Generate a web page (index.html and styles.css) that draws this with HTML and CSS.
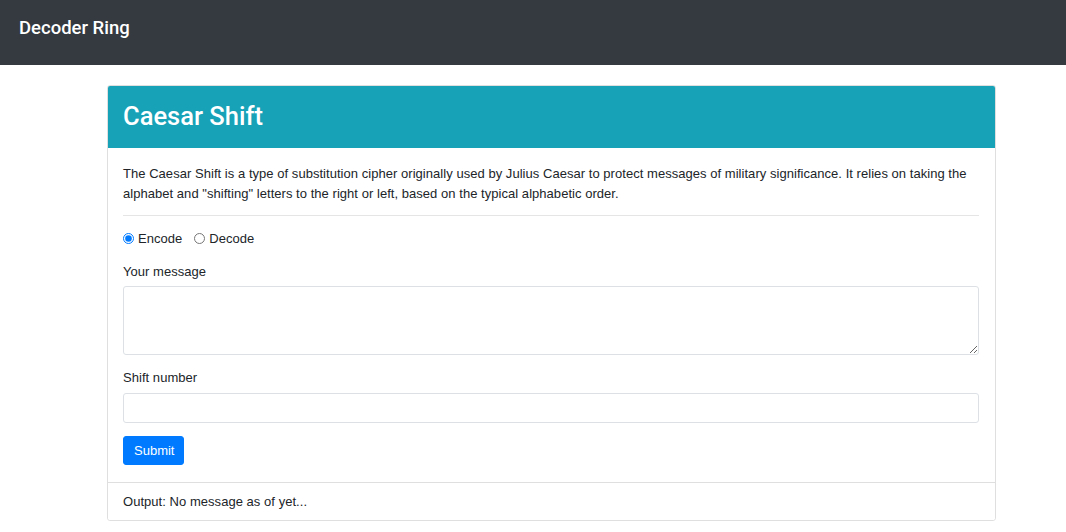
FILE: index.html
```html
<!DOCTYPE html>
<html lang="en">
<head>
<meta charset="utf-8">
<title>Decoder Ring</title>
<link rel="stylesheet" href="styles.css">
</head>
<body>
<nav class="navbar">
  <span class="brand">Decoder Ring</span>
</nav>
<main class="container">
  <section class="card">
    <header class="card-header">
      <h2 class="card-title">Caesar Shift</h2>
    </header>
    <div class="card-body">
      <p class="intro">The Caesar Shift is a type of substitution cipher originally used by Julius Caesar to protect messages of military significance. It relies on taking the alphabet and "shifting" letters to the right or left, based on the typical alphabetic order.</p>
      <hr class="divider">
      <form class="form">
        <div class="form-group radios">
          <label class="radio"><input type="radio" name="mode" checked> Encode</label>
          <label class="radio"><input type="radio" name="mode"> Decode</label>
        </div>
        <div class="form-group">
          <label class="label" for="msg">Your message</label>
          <textarea id="msg" class="control textarea"></textarea>
        </div>
        <div class="form-group">
          <label class="label" for="shift">Shift number</label>
          <input id="shift" class="control input" type="number">
        </div>
        <button type="button" class="btn">Submit</button>
      </form>
    </div>
    <footer class="card-footer">Output: No message as of yet...</footer>
  </section>
</main>
</body>
</html>
```

FILE: styles.css
```css
* { box-sizing: border-box; }
html, body { margin: 0; padding: 0; }
body {
  font-family: "Liberation Sans", Arial, sans-serif;
  font-size: 13px;
  line-height: 19.5px;
  letter-spacing: 0.04px;
  color: #212529;
  background: #fff;
}
.navbar {
  height: 65px;
  background: #343a40;
  padding: 15px 19px 0;
}
.brand {
  color: #fff;
  font-family: Roboto, "Liberation Sans", Arial, sans-serif;
  font-size: 18.5px;
  line-height: 27px;
  font-weight: 500;
  letter-spacing: 0;
}
.container {
  width: 889px;
  margin: 20px auto 0 107px;
}
.card {
  border: 1px solid rgba(0,0,0,.125);
  border-radius: 3px;
  overflow: hidden;
}
.card-header {
  background: #17a2b8;
  padding: 15px 16px 16px 15px;
}
.card-title {
  margin: 0;
  color: #fff;
  font-family: Roboto, "Liberation Sans", Arial, sans-serif;
  font-size: 25.5px;
  line-height: 31px;
  font-weight: 500;
  letter-spacing: 0;
}
.card-body {
  padding: 16px 16px 17px 15px;
}
.intro { margin: 0; }
.divider {
  border: 0;
  border-top: 1px solid rgba(0,0,0,.1);
  margin: 12px 0 13px;
}
.form { margin: 0; }
.form-group { margin-bottom: 13px; }
.radios {
  display: flex;
  gap: 12px;
}
.radio {
  display: inline-flex;
  align-items: center;
  gap: 4px;
}
.radio input {
  margin: 0;
  width: 11px;
  height: 11px;
  accent-color: #007bff;
}
.label {
  display: block;
  margin-bottom: 5px;
}
.control {
  display: block;
  width: 100%;
  border: 1px solid #dde1e5;
  border-radius: 3px;
  font: inherit;
  padding: 5px 10px;
  background: #fff;
}
.textarea { height: 69px; resize: vertical; }
.input { height: 30px; }
.btn {
  font: inherit;
  color: #fff;
  background: #007bff;
  border: 1px solid #007bff;
  border-radius: 3px;
  padding: 4px 10px;
  height: 29px;
  width: 61px;
  line-height: 19px;
}
.card-footer {
  border-top: 1px solid rgba(0,0,0,.125);
  background: #fff;
  padding: 9px 16px 9px 15px;
}
```
